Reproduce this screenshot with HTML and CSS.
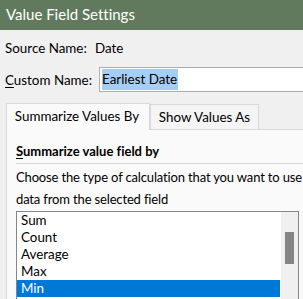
FILE: index.html
```html
<!DOCTYPE html>
<html lang="en">
<head>
    <meta charset="UTF-8">
    <title>Value Field Settings</title>
    <link rel="stylesheet" href="styles.css">
</head>
<body>
    <div class="dialog">
        <div class="titlebar">Value Field Settings</div>

        <div class="field-row source-row">
            <span class="label">Source Name:</span>
            <span class="value">Date</span>
        </div>

        <div class="field-row custom-row">
            <label class="label" for="custom-name"><u>C</u>ustom Name:</label>
            <div class="text-input" id="custom-name"><span class="selection">Earliest Date</span></div>
        </div>

        <div class="tabs">
            <div class="tab active">Summarize Values By</div>
            <div class="tab">Show Values As</div>
        </div>

        <div class="panel">
            <div class="panel-heading"><u>S</u>ummarize value field by</div>
            <p class="hint">Choose the type of calculation that you want to use<br>data from the selected field</p>

            <div class="listbox">
                <ul class="options">
                    <li>Sum</li>
                    <li>Count</li>
                    <li>Average</li>
                    <li>Max</li>
                    <li class="selected">Min</li>
                </ul>
                <div class="scrollbar">
                    <div class="thumb"></div>
                </div>
            </div>
        </div>
    </div>
</body>
</html>
```

FILE: styles.css
```css
* {
    margin: 0;
    padding: 0;
    box-sizing: border-box;
}

body {
    background-color: #f0f0f0;
    font-family: Lato, "Noto Sans", sans-serif;
    font-size: 13.4px;
    font-variant-ligatures: none;
    color: #000;
    overflow: hidden;
}

.dialog {
    width: 340px;
    height: 299px;
    overflow: hidden;
}

.titlebar {
    height: 30px;
    line-height: 28px;
    padding-left: 6px;
    background-color: #617a5d;
    color: #fff;
    font-size: 15px;
}

.field-row {
    display: flex;
    align-items: center;
    padding-left: 5px;
}

.field-row .label {
    flex: none;
}

.source-row {
    margin-top: 6px;
    height: 24px;
}

.source-row .label {
    width: 90px;
}

.custom-row {
    margin-top: 7px;
    height: 25px;
}

.custom-row .label {
    width: 94px;
}

.label u,
.panel-heading u {
    text-decoration-thickness: 1px;
    text-underline-offset: 2px;
}

.text-input {
    flex: 1;
    height: 25px;
    background-color: #fff;
    border: 1px solid #adadad;
    padding: 1px 2px;
    line-height: 21px;
}

.selection {
    display: inline-block;
    background-color: #a6cdf2;
    padding-right: 1px;
}

.tabs {
    display: flex;
    align-items: flex-end;
    margin-top: 11px;
    margin-left: 6px;
    height: 26px;
}

.tab {
    width: 109px;
    height: 25px;
    line-height: 24px;
    text-align: center;
    background-color: #f5f5f5;
    border: 1px solid #d9d9d9;
    border-bottom: none;
}

.tab.active {
    width: 144px;
    height: 27px;
    margin-bottom: -1px;
    padding-right: 2px;
    background-color: #fafafa;
    position: relative;
    z-index: 1;
}

.panel {
    margin-left: 6px;
    height: 200px;
    background-color: #fafafa;
    border: 1px solid #d9d9d9;
    padding: 0 0 0 9px;
}

.panel-heading {
    margin-top: 11px;
    height: 23px;
    line-height: 20px;
    font-size: 13px;
    font-weight: bold;
    border-bottom: 1px solid #d5d5d5;
}

.hint {
    margin-top: 2px;
    line-height: 22px;
    font-size: 13px;
    white-space: nowrap;
    letter-spacing: -0.15px;
}

.listbox {
    display: flex;
    width: 283px;
    height: 100px;
    margin-top: 1px;
    background-color: #fff;
    border: 1px solid #828790;
}

.options {
    list-style: none;
    flex: 1;
}

.options li {
    height: 17px;
    line-height: 17px;
    padding-left: 4px;
}

.options li.selected {
    background-color: #0078d7;
    color: #fff;
}

.scrollbar {
    width: 17px;
    margin-left: 1px;
    background-color: #f0f0f0;
    padding: 20px 4px 0;
}

.thumb {
    height: 32px;
    background-color: #858585;
}
```
